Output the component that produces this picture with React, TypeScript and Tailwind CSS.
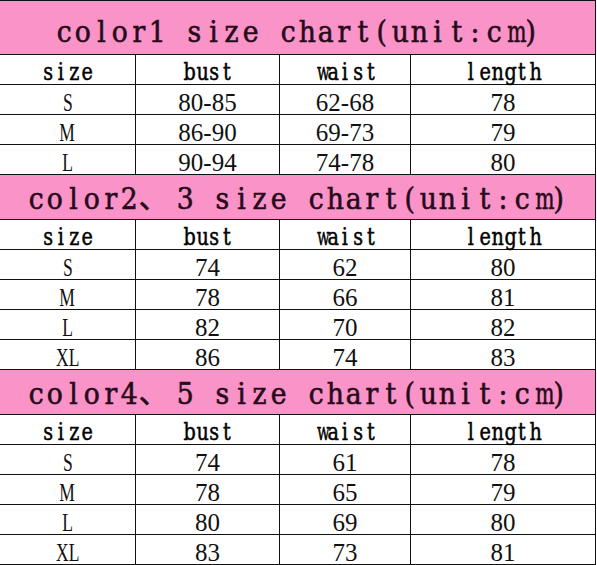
const charts = [
  {
    title: 'color1 size chart(unit:cm)',
    tall: true,
    rows: [
      ['S', '80-85', '62-68', '78'],
      ['M', '86-90', '69-73', '79'],
      ['L', '90-94', '74-78', '80'],
    ],
  },
  {
    title: 'color2、3 size chart(unit:cm)',
    tall: false,
    rows: [
      ['S', '74', '62', '80'],
      ['M', '78', '66', '81'],
      ['L', '82', '70', '82'],
      ['XL', '86', '74', '83'],
    ],
  },
  {
    title: 'color4、5 size chart(unit:cm)',
    tall: false,
    rows: [
      ['S', '74', '61', '78'],
      ['M', '78', '65', '79'],
      ['L', '80', '69', '80'],
      ['XL', '83', '73', '81'],
    ],
  },
]

const headers = ['size', 'bust', 'waist', 'length']

const wide = 'mwMW'

// fixed-pitch serif text, like the SimSun latin glyphs in the source sheet
function TitleText({ text }: { text: string }) {
  return (
    <span className="font-['DejaVu_Serif',serif] text-[29px] leading-none text-[#260a19] whitespace-pre [-webkit-text-stroke:0.6px_#260a19]">
      {text.split('').map((ch, i) =>
        ch === '、' ? (
          <span key={i} className="inline-block w-[37.4px] text-left">
            <span className="inline-block font-['Noto_Sans_CJK_SC',sans-serif] leading-[0.5]">{ch}</span>
          </span>
        ) : (
          <span key={i} className="inline-block w-[18.7px] text-center">
            <span className={`inline-block ${wide.includes(ch) ? 'scale-x-[0.7]' : 'scale-x-[0.92]'}`}>{ch}</span>
          </span>
        )
      )}
    </span>
  )
}

function HeadText({ text }: { text: string }) {
  return (
    <span className="font-['DejaVu_Serif',serif] text-[24px] leading-none text-black [-webkit-text-stroke:0.5px_#000]">
      {text.split('').map((ch, i) => (
        <span key={i} className="inline-block w-[12.7px] text-center">
          <span className={`inline-block ${wide.includes(ch) ? 'scale-x-[0.62]' : 'scale-x-[0.8]'}`}>{ch}</span>
        </span>
      ))}
    </span>
  )
}

function Row({ cells, head }: { cells: string[]; head?: boolean }) {
  return (
    <div className="grid grid-cols-[136px_144px_131px_184px] h-[30px] border-b border-[#111]">
      {cells.map((c, i) => (
        <div
          key={i}
          className={`flex items-center justify-center ${i < 3 ? 'border-r border-[#111]' : ''} ${
            head
              ? 'pt-[4px] leading-none'
              : "pt-[6px] leading-[20px] font-['Liberation_Serif',serif] text-[25px] text-[#111]"
          }`}
        >
          {head ? (
            <HeadText text={c} />
          ) : i === 0 ? (
            <span className="inline-block scale-x-[0.7]">{c}</span>
          ) : (
            c
          )}
        </div>
      ))}
    </div>
  )
}

export default function App() {
  return (
    <div className="w-[597px] h-[565px] bg-white overflow-hidden">
      <div className="w-[596px] border-t border-r border-[#111]">
        {charts.map((chart) => (
          <div key={chart.title}>
            {/* Title */}
            <div
              className={`flex items-center justify-center bg-[#fa93c8] border-b border-[#111] ${
                chart.tall ? 'h-[54px] pt-[9px]' : 'h-[45px] pt-[5px]'
              }`}
            >
              <TitleText text={chart.title} />
            </div>
            <Row cells={headers} head />
            {chart.rows.map((r) => (
              <Row key={r[0]} cells={r} />
            ))}
          </div>
        ))}
      </div>
    </div>
  )
}
